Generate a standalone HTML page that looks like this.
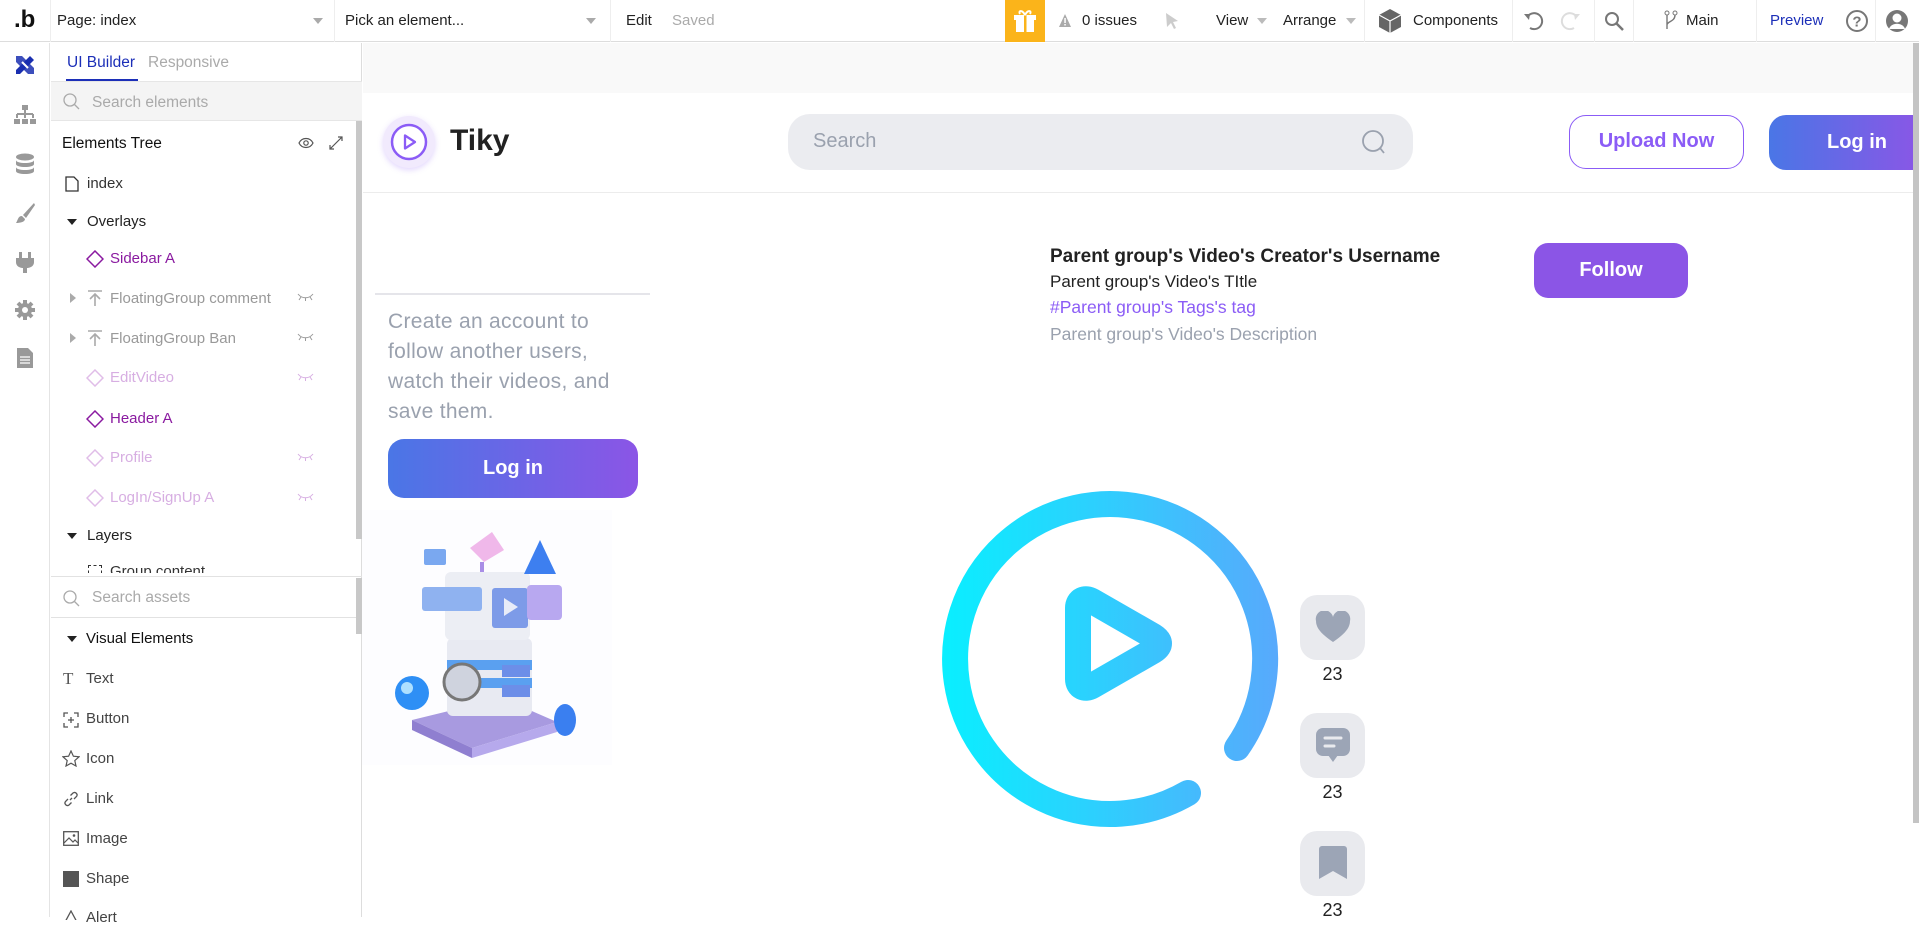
<!DOCTYPE html>
<html><head><meta charset="utf-8">
<style>
*{box-sizing:border-box;margin:0;padding:0}
body{width:1919px;height:917px;overflow:hidden;background:#fff;font-family:"Liberation Sans",sans-serif;position:relative;color:#222}
.a{position:absolute}
.tb{left:0;top:0;width:1919px;height:42px;border-bottom:1px solid #ddd;background:#fff;font-size:15px}
.tb .t{position:absolute;top:12px;white-space:nowrap}
.sep{position:absolute;top:0;width:1px;height:42px;background:#eee}
.car{position:absolute;top:18px;width:0;height:0;border-left:5px solid transparent;border-right:5px solid transparent;border-top:6px solid #aaa}
.lt{font-size:15px;position:absolute;white-space:nowrap}
</style></head><body>

<!-- top bar -->
<div class="a tb">
  <div class="t" style="left:14px;top:6px;font-size:24px;font-weight:bold;color:#111">.b</div>
  <div class="sep" style="left:50px"></div>
  <div class="t" style="left:57px">Page: index</div>
  <div class="car" style="left:313px"></div>
  <div class="sep" style="left:334px"></div>
  <div class="t" style="left:345px">Pick an element...</div>
  <div class="car" style="left:586px"></div>
  <div class="sep" style="left:610px"></div>
  <div class="t" style="left:626px">Edit</div>
  <div class="t" style="left:672px;color:#aaa">Saved</div>
  <div class="a" style="left:1005px;top:0;width:40px;height:42px;background:#fbb41a"></div>
  <svg class="a" style="left:1014px;top:9px" width="22" height="24" viewBox="0 0 22 24"><rect x="2" y="8" width="18" height="15" fill="#fff"/><rect x="0" y="6" width="22" height="5" fill="#fff"/><rect x="10" y="6" width="2.5" height="17" fill="#fbb41a"/><path d="M11 6C8 0 4 2 6 5M11 6c3-6 7-4 5-1" stroke="#fff" stroke-width="2" fill="none"/></svg>
  <svg class="a" style="left:1058px;top:13px" width="14" height="15"><path d="M7 1L13 14H1Z" fill="#aaa"/><rect x="6.3" y="5" width="1.5" height="5" fill="#fff"/><rect x="6.3" y="11" width="1.5" height="1.5" fill="#fff"/></svg>
  <div class="t" style="left:1082px">0 issues</div>
  <svg class="a" style="left:1164px;top:12px" width="16" height="18"><path d="M2 1L14 9L9 10L12 16L10 17L7 11L3 15Z" fill="#ccc"/></svg>
  <div class="t" style="left:1216px">View</div>
  <div class="car" style="left:1257px;border-top-color:#bbb"></div>
  <div class="t" style="left:1283px">Arrange</div>
  <div class="car" style="left:1346px;border-top-color:#bbb"></div>
  <div class="sep" style="left:1364px"></div>
  <svg class="a" style="left:1378px;top:8px" width="24" height="26" viewBox="0 0 24 26"><path d="M12 1L23 7V19L12 25L1 19V7Z" fill="#666"/><path d="M1 7L12 13L23 7M12 13V25" stroke="#fff" stroke-width="1.2" fill="none"/></svg>
  <div class="t" style="left:1413px">Components</div>
  <div class="sep" style="left:1512px"></div>
  <svg class="a" style="left:1522px;top:10px" width="22" height="22"><path d="M6 6A8 8 0 1 1 8 18" stroke="#777" stroke-width="2" fill="none"/><path d="M2 4L8 4L7 10Z" fill="#777"/></svg>
  <svg class="a" style="left:1560px;top:10px" width="22" height="22"><path d="M16 6A8 8 0 1 0 14 18" stroke="#ddd" stroke-width="2" fill="none"/><path d="M20 4L14 4L15 10Z" fill="#ddd"/></svg>
  <div class="sep" style="left:1594px"></div>
  <svg class="a" style="left:1604px;top:11px" width="22" height="22"><circle cx="8" cy="8" r="6" stroke="#777" stroke-width="2" fill="none"/><path d="M12.5 12.5L19 19" stroke="#777" stroke-width="2.5"/></svg>
  <div class="sep" style="left:1633px"></div>
  <svg class="a" style="left:1664px;top:10px" width="14" height="22"><circle cx="3" cy="3" r="2" stroke="#777" fill="none"/><circle cx="11" cy="3" r="2" stroke="#777" fill="none"/><path d="M3 5V19M11 5C11 12 3 11 3 15" stroke="#777" stroke-width="1.4" fill="none"/></svg>
  <div class="t" style="left:1686px">Main</div>
  <div class="sep" style="left:1756px"></div>
  <div class="t" style="left:1770px;color:#1c2fb8">Preview</div>
  <svg class="a" style="left:1845px;top:9px" width="24" height="24"><circle cx="12" cy="12" r="10" stroke="#777" stroke-width="2" fill="none"/><text x="12" y="17.5" text-anchor="middle" font-size="15" font-weight="bold" fill="#777" font-family="Liberation Sans">?</text></svg>
  <div class="sep" style="left:1875px"></div>
  <svg class="a" style="left:1885px;top:9px" width="24" height="24"><circle cx="12" cy="12" r="11" fill="#777"/><circle cx="12" cy="9" r="4.5" fill="#fff"/><path d="M4 20C6 13 18 13 20 20" fill="#fff"/></svg>
</div>

<!-- icon bar -->
<div class="a" style="left:0;top:43px;width:50px;height:874px;border-right:1px solid #e4e4e4;background:#fff"></div>
<svg class="a" style="left:13px;top:53px" width="24" height="24" viewBox="0 0 24 24"><path d="M3 17L17 3L21 7L7 21L3 21Z" fill="#1a2fb0"/><path d="M3 3L9 3L21 15L21 21L15 21L3 9Z" fill="#1a2fb0" opacity=".85"/><path d="M9 9l6 6" stroke="#fff" stroke-width="2"/></svg>
<svg class="a" style="left:13px;top:104px" width="24" height="22"><rect x="9" y="1" width="6" height="5" fill="#999"/><path d="M12 6V10M4 10H20M4 10V14M12 10V14M20 10V14" stroke="#999" stroke-width="2" fill="none"/><rect x="1" y="15" width="6" height="5" fill="#999"/><rect x="9" y="15" width="6" height="5" fill="#999"/><rect x="17" y="15" width="6" height="5" fill="#999"/></svg>
<svg class="a" style="left:15px;top:153px" width="20" height="22"><ellipse cx="10" cy="4" rx="9" ry="3.5" fill="#999"/><path d="M1 7C1 11 19 11 19 7V11C19 15 1 15 1 11Z" fill="#999"/><path d="M1 14C1 18 19 18 19 14V18C19 22 1 22 1 18Z" fill="#999"/></svg>
<svg class="a" style="left:14px;top:202px" width="22" height="22"><path d="M20 1L9 13L12 16L21 3Z" fill="#999"/><path d="M8 14C4 14 4 18 2 21C6 21 11 20 11 17Z" fill="#999"/></svg>
<svg class="a" style="left:15px;top:251px" width="20" height="22"><rect x="4" y="1" width="3" height="6" fill="#999"/><rect x="13" y="1" width="3" height="6" fill="#999"/><path d="M1 7H19V11C19 16 14 17 12 17V22H8V17C6 17 1 16 1 11Z" fill="#999"/></svg>
<svg class="a" style="left:14px;top:299px" width="22" height="22" viewBox="0 0 22 22"><circle cx="11" cy="11" r="7" fill="#999"/><g stroke="#999" stroke-width="4"><path d="M11 1V21M1 11H21M4 4L18 18M18 4L4 18"/></g><circle cx="11" cy="11" r="3" fill="#fff"/></svg>
<svg class="a" style="left:16px;top:347px" width="18" height="22"><path d="M1 1H12L17 6V21H1Z" fill="#999"/><path d="M4 10H14M4 13H14M4 16H14" stroke="#fff" stroke-width="1.3"/></svg>

<!-- left panel -->
<div class="a" style="left:50px;top:43px;width:312px;height:874px;border-right:1px solid #ddd;background:#fff"></div>
<div class="lt" style="left:67px;top:54px;color:#1c2fb8;font-size:15.5px">UI Builder</div>
<div class="lt" style="left:148px;top:54px;color:#aaa;font-size:15.5px">Responsive</div>
<div class="a" style="left:66px;top:79px;width:72px;height:2px;background:#1c2fb8"></div>
<div class="a" style="left:51px;top:81px;width:311px;height:40px;background:#f4f4f4;border-top:1px solid #e6e6e6;border-bottom:1px solid #e6e6e6"></div>
<svg class="a" style="left:63px;top:93px" width="18" height="18"><circle cx="7" cy="7" r="6" stroke="#aaa" stroke-width="1.3" fill="none"/><path d="M11.5 11.5L16 16" stroke="#aaa" stroke-width="1.3"/></svg>
<div class="lt" style="left:92px;top:94px;color:#aaa;font-size:15.5px">Search elements</div>
<div class="a" style="left:356px;top:121px;width:6px;height:418px;background:#c8c8c8"></div>
<div class="lt" style="left:62px;top:135px;color:#111;font-size:15.5px">Elements Tree</div>
<svg class="a" style="left:298px;top:137px" width="16" height="12"><path d="M1 6C4 0 12 0 15 6C12 12 4 12 1 6Z" stroke="#555" fill="none" stroke-width="1.2"/><circle cx="8" cy="6" r="2.2" stroke="#555" fill="none" stroke-width="1.2"/></svg>
<svg class="a" style="left:328px;top:135px" width="16" height="16"><path d="M2 14L14 2M10 2H14V6M2 10V14H6" stroke="#555" fill="none" stroke-width="1.2"/></svg>
<svg class="a" style="left:65px;top:176px" width="14" height="16"><path d="M1 1H9L13 5V15H1Z" stroke="#333" fill="none" stroke-width="1.3"/></svg>
<div class="lt" style="left:87px;top:175px;color:#333">index</div>
<svg class="a" style="left:67px;top:219px" width="10" height="6"><path d="M0 0H10L5 6Z" fill="#222"/></svg>
<div class="lt" style="left:87px;top:213px;color:#222">Overlays</div>

<svg class="a" style="left:86px;top:250px" width="18" height="18"><path d="M9 1L17 9L9 17L1 9Z" stroke="#8a1aa0" stroke-width="1.5" fill="none"/></svg>
<div class="lt" style="left:110px;top:250px;color:#8a1aa0">Sidebar A</div>

<svg class="a" style="left:70px;top:293px" width="6" height="10"><path d="M0 0L6 5L0 10Z" fill="#aaa"/></svg>
<svg class="a" style="left:87px;top:290px" width="16" height="16"><path d="M1 1H15M8 16V4M3 9L8 4L13 9" stroke="#aaa" stroke-width="1.6" fill="none"/></svg>
<div class="lt" style="left:110px;top:290px;color:#999">FloatingGroup comment</div>
<svg class="a" style="left:297px;top:293px" width="17" height="8"><path d="M1 1C5 6 12 6 16 1M4 4L2 7M8.5 5V8M13 4L15 7" stroke="#999" fill="none" stroke-width="1"/></svg>

<svg class="a" style="left:70px;top:333px" width="6" height="10"><path d="M0 0L6 5L0 10Z" fill="#aaa"/></svg>
<svg class="a" style="left:87px;top:330px" width="16" height="16"><path d="M1 1H15M8 16V4M3 9L8 4L13 9" stroke="#aaa" stroke-width="1.6" fill="none"/></svg>
<div class="lt" style="left:110px;top:330px;color:#999">FloatingGroup Ban</div>
<svg class="a" style="left:297px;top:333px" width="17" height="8"><path d="M1 1C5 6 12 6 16 1M4 4L2 7M8.5 5V8M13 4L15 7" stroke="#999" fill="none" stroke-width="1"/></svg>

<svg class="a" style="left:86px;top:369px" width="18" height="18"><path d="M9 1L17 9L9 17L1 9Z" stroke="#e0bde8" stroke-width="1.5" fill="none"/></svg>
<div class="lt" style="left:110px;top:369px;color:#d7aee2">EditVideo</div>
<svg class="a" style="left:297px;top:373px" width="17" height="8"><path d="M1 1C5 6 12 6 16 1M4 4L2 7M8.5 5V8M13 4L15 7" stroke="#d7aee2" fill="none" stroke-width="1"/></svg>

<svg class="a" style="left:86px;top:410px" width="18" height="18"><path d="M9 1L17 9L9 17L1 9Z" stroke="#8a1aa0" stroke-width="1.5" fill="none"/></svg>
<div class="lt" style="left:110px;top:410px;color:#8a1aa0">Header A</div>

<svg class="a" style="left:86px;top:449px" width="18" height="18"><path d="M9 1L17 9L9 17L1 9Z" stroke="#e0bde8" stroke-width="1.5" fill="none"/></svg>
<div class="lt" style="left:110px;top:449px;color:#d7aee2">Profile</div>
<svg class="a" style="left:297px;top:453px" width="17" height="8"><path d="M1 1C5 6 12 6 16 1M4 4L2 7M8.5 5V8M13 4L15 7" stroke="#d7aee2" fill="none" stroke-width="1"/></svg>

<svg class="a" style="left:86px;top:489px" width="18" height="18"><path d="M9 1L17 9L9 17L1 9Z" stroke="#e0bde8" stroke-width="1.5" fill="none"/></svg>
<div class="lt" style="left:110px;top:489px;color:#d7aee2">LogIn/SignUp A</div>
<svg class="a" style="left:297px;top:493px" width="17" height="8"><path d="M1 1C5 6 12 6 16 1M4 4L2 7M8.5 5V8M13 4L15 7" stroke="#d7aee2" fill="none" stroke-width="1"/></svg>

<svg class="a" style="left:67px;top:533px" width="10" height="6"><path d="M0 0H10L5 6Z" fill="#222"/></svg>
<div class="lt" style="left:87px;top:527px;color:#222">Layers</div>
<div class="a" style="left:51px;top:560px;width:304px;height:13px;overflow:hidden">
  <div class="lt" style="left:59px;top:3px;color:#333">Group content</div>
  <div class="a" style="left:37px;top:5px;width:14px;height:14px;border:1.5px dashed #333"></div>
</div>
<div class="a" style="left:51px;top:576px;width:311px;height:1px;background:#e2e2e2"></div>
<div class="a" style="left:51px;top:617px;width:305px;height:1px;background:#e2e2e2"></div>
<div class="a" style="left:356px;top:578px;width:6px;height:56px;background:#c8c8c8"></div>
<svg class="a" style="left:63px;top:590px" width="18" height="18"><circle cx="7" cy="7" r="6" stroke="#aaa" stroke-width="1.3" fill="none"/><path d="M11.5 11.5L16 16" stroke="#aaa" stroke-width="1.3"/></svg>
<div class="lt" style="left:92px;top:589px;color:#aaa;font-size:15.5px">Search assets</div>
<svg class="a" style="left:67px;top:636px" width="10" height="6"><path d="M0 0H10L5 6Z" fill="#222"/></svg>
<div class="lt" style="left:86px;top:630px;color:#111">Visual Elements</div>
<div class="lt" style="left:63px;top:669px;font-family:'Liberation Serif',serif;font-size:17px;color:#555">T</div>
<div class="lt" style="left:86px;top:670px;color:#444">Text</div>
<svg class="a" style="left:63px;top:712px" width="16" height="16"><path d="M1 5V1H5M11 1H15V5M15 11V15H11M5 15H1V11M8 5V11M5 8H11" stroke="#555" stroke-width="1.3" fill="none"/></svg>
<div class="lt" style="left:86px;top:710px;color:#444">Button</div>
<svg class="a" style="left:62px;top:750px" width="18" height="17"><path d="M9 1L11.4 6.2L17 6.8L12.8 10.6L14 16L9 13.2L4 16L5.2 10.6L1 6.8L6.6 6.2Z" stroke="#555" stroke-width="1.2" fill="none"/></svg>
<div class="lt" style="left:86px;top:750px;color:#444">Icon</div>
<svg class="a" style="left:63px;top:791px" width="16" height="16"><path d="M7 9L9 7M5 8L2.5 10.5A2.5 2.5 0 0 0 6 14L8.5 11.5M11 8L13.5 5.5A2.5 2.5 0 0 0 10 2L7.5 4.5" stroke="#555" stroke-width="1.3" fill="none"/></svg>
<div class="lt" style="left:86px;top:790px;color:#444">Link</div>
<svg class="a" style="left:63px;top:831px" width="16" height="15"><rect x=".7" y=".7" width="14.6" height="13.6" stroke="#555" stroke-width="1.3" fill="none"/><path d="M1 12L6 7L10 11L12 9L15 12" stroke="#555" stroke-width="1.2" fill="none"/><circle cx="11" cy="4.5" r="1.3" fill="#555"/></svg>
<div class="lt" style="left:86px;top:830px;color:#444">Image</div>
<div class="a" style="left:63px;top:871px;width:16px;height:16px;background:#555"></div>
<div class="lt" style="left:86px;top:870px;color:#444">Shape</div>
<svg class="a" style="left:63px;top:910px" width="16" height="10"><path d="M8 1L15 14H1Z" stroke="#555" stroke-width="1.3" fill="none"/></svg>
<div class="lt" style="left:86px;top:909px;color:#444">Alert</div>

<!-- canvas -->
<div class="a" style="left:363px;top:43px;width:1556px;height:50px;background:#f9f9f9"></div>
<div class="a" style="left:363px;top:93px;width:1550px;height:100px;background:#fff;border-bottom:1.5px solid #ececec"></div>
<div class="a" style="left:1913px;top:43px;width:6px;height:780px;background:#c4c4c4"></div>

<div class="a" style="left:383px;top:116px;width:52px;height:52px;border-radius:50%;background:#f1eafd;box-shadow:0 2px 6px rgba(139,92,246,.25)"></div>
<svg class="a" style="left:388px;top:121px" width="42" height="42"><circle cx="21" cy="21" r="17" stroke="#8b5cf6" stroke-width="2.5" fill="#fff"/><path d="M17 14.5V27.5L27 21Z" stroke="#8b5cf6" stroke-width="2.3" stroke-linejoin="round" fill="none"/></svg>
<div class="a" style="left:450px;top:124px;font-size:30px;font-weight:bold;color:#222">Tiky</div>

<div class="a" style="left:788px;top:114px;width:625px;height:56px;border-radius:22px;background:#ebecf0"></div>
<div class="a" style="left:813px;top:130px;font-size:20px;color:#9aa1ae">Search</div>
<svg class="a" style="left:1360px;top:129px" width="28" height="28"><circle cx="13" cy="12" r="10" stroke="#9aa1ae" stroke-width="1.8" fill="none"/><path d="M20 19L24 24" stroke="#9aa1ae" stroke-width="1.8"/></svg>

<div class="a" style="left:1569px;top:115px;width:175px;height:54px;border:1.5px solid #8b5cf6;border-radius:17px;text-align:center;line-height:51px;font-size:20px;font-weight:bold;color:#8b5cf6">Upload Now</div>
<div class="a" style="left:1769px;top:115px;width:144px;height:55px;border-radius:17px 0 0 17px;background:linear-gradient(90deg,#4a76e6,#8758e6);color:#fff;font-size:20px;font-weight:bold;line-height:55px;padding-left:58px">Log in</div>

<div class="a" style="left:375px;top:293px;width:275px;height:1.5px;background:#e5e5ea"></div>
<div class="a" style="left:388px;top:307px;font-size:21px;line-height:30px;color:#9aa1ae;width:260px;white-space:nowrap;letter-spacing:0.3px">Create an account to<br>follow another users,<br>watch their videos, and<br>save them.</div>
<div class="a" style="left:388px;top:439px;width:250px;height:59px;border-radius:16px;background:linear-gradient(90deg,#4a76e6,#8b55e6);color:#fff;text-align:center;line-height:59px;font-size:20px;font-weight:bold">Log in</div>

<!-- illustration -->
<svg class="a" style="left:362px;top:510px" width="250" height="255" viewBox="0 0 250 255">
  <rect width="250" height="255" fill="#fdfdff"/>
  <path d="M50 210L140 188L195 212L110 238Z" fill="#a89ae0"/>
  <path d="M50 210L110 238V248L50 220Z" fill="#8f7fd0"/>
  <path d="M110 238L195 212V222L110 248Z" fill="#b6a9ec"/>
  <rect x="85" y="128" width="85" height="78" rx="6" fill="#e8eaf2"/>
  <rect x="85" y="150" width="85" height="10" fill="#5aa0f0"/>
  <rect x="85" y="168" width="85" height="10" fill="#5aa0f0"/>
  <rect x="140" y="155" width="28" height="12" fill="#6c8ee8"/>
  <rect x="140" y="175" width="28" height="12" fill="#6c8ee8"/>
  <circle cx="100" cy="172" r="18" fill="#cfd3de" stroke="#777" stroke-width="3"/>
  <rect x="83" y="62" width="85" height="68" rx="6" fill="#eceef4"/>
  <rect x="130" y="78" width="36" height="40" rx="3" fill="#7d9be8"/>
  <path d="M142 88V106L156 97Z" fill="#e8ecf8"/>
  <rect x="60" y="77" width="60" height="24" rx="3" fill="#8fb2f0"/>
  <path d="M130 22L142 40L122 52L108 38Z" fill="#f0b8ea"/>
  <path d="M120 52V62" stroke="#a98ee6" stroke-width="4"/>
  <path d="M178 30L194 64H162Z" fill="#3d7ff0"/>
  <rect x="165" y="75" width="35" height="35" rx="4" fill="#b8a8f0"/>
  <rect x="62" y="39" width="22" height="16" rx="2" fill="#7aa8f0"/>
  <circle cx="50" cy="183" r="17" fill="#2e8ff5"/>
  <circle cx="45" cy="178" r="6" fill="#aee0ff"/>
  <ellipse cx="203" cy="210" rx="11" ry="16" fill="#3a7ff0"/>
</svg>

<!-- creator info -->
<div class="a" style="left:1050px;top:246px;font-size:19px;font-weight:bold;color:#222">Parent group's Video's Creator's Username</div>
<div class="a" style="left:1050px;top:272px;font-size:17px;color:#222">Parent group's Video's TItle</div>
<div class="a" style="left:1050px;top:297px;font-size:17.5px;color:#8b5cf6">#Parent group's Tags's tag</div>
<div class="a" style="left:1050px;top:324px;font-size:17.5px;color:#9aa1ae">Parent group's Video's Description</div>
<div class="a" style="left:1534px;top:243px;width:154px;height:55px;border-radius:14px;background:#8b55e6;color:#fff;text-align:center;line-height:55px;font-size:20px;font-weight:bold">Follow</div>

<!-- player -->
<svg class="a" style="left:920px;top:480px" width="380" height="380">
  <defs><linearGradient id="g2" gradientUnits="userSpaceOnUse" x1="18" x2="355" y1="0" y2="0"><stop offset="0" stop-color="#08f0ff"/><stop offset="1" stop-color="#57aafc"/></linearGradient></defs>
  <path d="M317 268A155 155 0 1 0 268 313" stroke="url(#g2)" stroke-width="26" stroke-linecap="round" fill="none"/>
  <path d="M158 128C158 120 165 117 172 121L233 156C241 161 241 166 233 171L172 206C165 210 158 207 158 199Z" stroke="url(#g2)" stroke-width="26" stroke-linejoin="round" fill="none"/>
</svg>

<!-- actions -->
<div class="a" style="left:1300px;top:595px;width:65px;height:65px;border-radius:17px;background:#e9eaee"></div>
<svg class="a" style="left:1315px;top:611px" width="36" height="32"><path d="M18 31C8 24 1 18 1 10A8.5 8.5 0 0 1 18 6A8.5 8.5 0 0 1 35 10C35 18 28 24 18 31Z" fill="#9ca5b6"/></svg>
<div class="a" style="left:1300px;top:664px;width:65px;text-align:center;font-size:18px;color:#222">23</div>
<div class="a" style="left:1300px;top:713px;width:65px;height:65px;border-radius:17px;background:#e9eaee"></div>
<svg class="a" style="left:1316px;top:728px" width="34" height="36"><rect x="0" y="0" width="34" height="28" rx="7" fill="#9ca5b6"/><path d="M12 27L17 34L22 27Z" fill="#9ca5b6"/><path d="M9 10H25M9 18H18" stroke="#e9eaee" stroke-width="3" stroke-linecap="round"/></svg>
<div class="a" style="left:1300px;top:782px;width:65px;text-align:center;font-size:18px;color:#222">23</div>
<div class="a" style="left:1300px;top:831px;width:65px;height:65px;border-radius:17px;background:#e9eaee"></div>
<svg class="a" style="left:1318px;top:846px" width="30" height="35"><path d="M4 0H26A3 3 0 0 1 29 3V33L15 25L1 33V3A3 3 0 0 1 4 0Z" fill="#9ca5b6"/></svg>
<div class="a" style="left:1300px;top:900px;width:65px;text-align:center;font-size:18px;color:#222">23</div>

</body></html>
